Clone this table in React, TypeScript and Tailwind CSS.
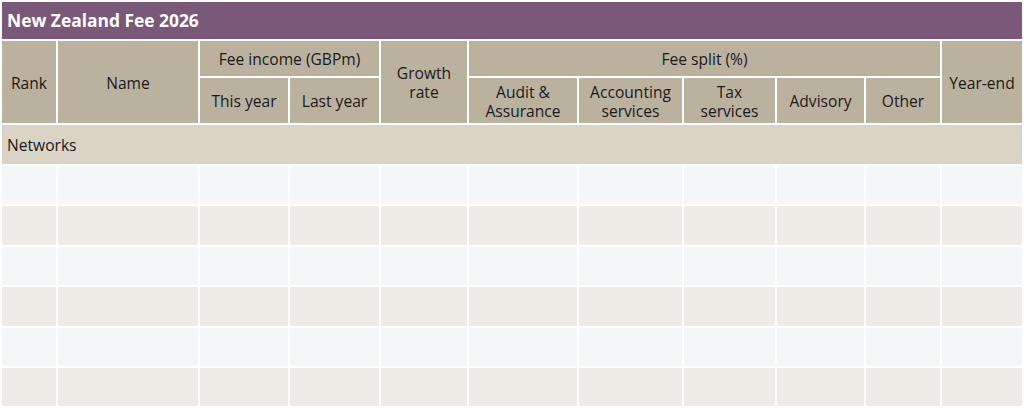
import React from "react";

const H = "bg-[#bab29f] flex items-center justify-center text-center text-[15.6px] leading-[19px] text-[#1a1a1a] pt-[2px]";

export default function App() {
  const rows = [0, 1, 2, 3, 4, 5];
  const cols = Array.from({ length: 11 }, (_, i) => i);
  return (
    <div
      className="w-[1024px] h-[408px] bg-white overflow-hidden pl-[2px] pt-[2px]"
      style={{ fontFamily: '"Open Sans", "Noto Sans", sans-serif' }}
    >
      <div className="grid gap-[2px] grid-cols-[54px_140px_88px_89px_86px_108px_103px_91px_87px_74px_80px] grid-rows-[37px_35px_45px_39px_repeat(6,38.4px)]">
        <div className="col-span-11 bg-[#7a5877] text-white font-bold text-[17.4px] flex items-center pl-[5px]">
          New Zealand Fee 2026
        </div>
        <div className={`${H} row-span-2`}>Rank</div>
        <div className={`${H} row-span-2`}>Name</div>
        <div className={`${H} col-span-2`}>Fee income (GBPm)</div>
        <div className={`${H} row-span-2`}>
          Growth
          <br />
          rate
        </div>
        <div className={`${H} col-span-5`}>Fee split (%)</div>
        <div className={`${H} row-span-2`}>Year-end</div>
        <div className={H}>This year</div>
        <div className={H}>Last year</div>
        <div className={H}>
          Audit &amp;
          <br />
          Assurance
        </div>
        <div className={H}>
          Accounting
          <br />
          services
        </div>
        <div className={H}>
          Tax
          <br />
          services
        </div>
        <div className={H}>Advisory</div>
        <div className={H}>Other</div>
        <div className="col-span-11 bg-[#d9d4c5] flex items-center pl-[5px] pt-[2px] text-[15.6px] text-[#1a1a1a]">
          Networks
        </div>
        {rows.map((r) =>
          cols.map((c) => (
            <div
              key={`${r}-${c}`}
              className={r % 2 === 0 ? "bg-[#f5f6f7]" : "bg-[#efece8]"}
            />
          ))
        )}
      </div>
    </div>
  );
}
